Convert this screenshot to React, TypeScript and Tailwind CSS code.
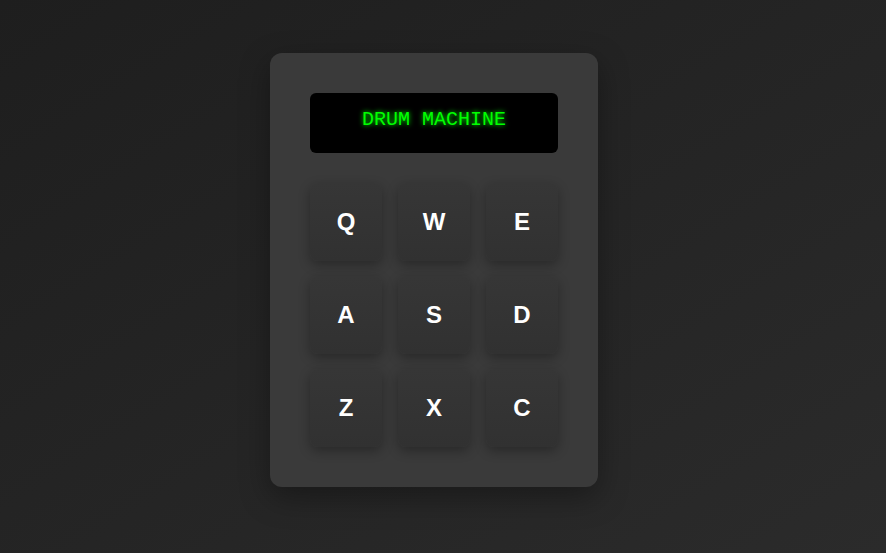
const keys = ['Q', 'W', 'E', 'A', 'S', 'D', 'Z', 'X', 'C']

export default function App() {
  return (
    <div className="min-h-screen w-full bg-gradient-to-br from-[#1e1e1e] to-[#2b2b2b] flex justify-center items-start pt-[53px] pr-[18px]">
      <div className="w-[328px] rounded-xl bg-[#3a3a3a] p-10 shadow-[0_10px_30px_rgba(0,0,0,0.35)]">
        <div className="h-[60px] rounded-md bg-black flex justify-center pt-[15px]">
          <span
            className="text-[20px] leading-6 text-[#00ff00] [text-shadow:0_0_5px_#00ff00]"
            style={{ fontFamily: '"Liberation Mono", "Courier New", monospace' }}
          >
            DRUM MACHINE
          </span>
        </div>
        <div className="mt-[30px] grid grid-cols-3 gap-x-4 gap-y-[15px]">
          {keys.map((k) => (
            <button
              key={k}
              className="h-[78px] rounded-lg bg-gradient-to-b from-[#363636] to-[#313131] text-white text-[24px] font-semibold flex items-center justify-center shadow-[0_4px_12px_rgba(0,0,0,0.3)]"
              style={{ fontFamily: '"Liberation Sans", Arial, sans-serif' }}
            >
              {k}
            </button>
          ))}
        </div>
      </div>
    </div>
  )
}
